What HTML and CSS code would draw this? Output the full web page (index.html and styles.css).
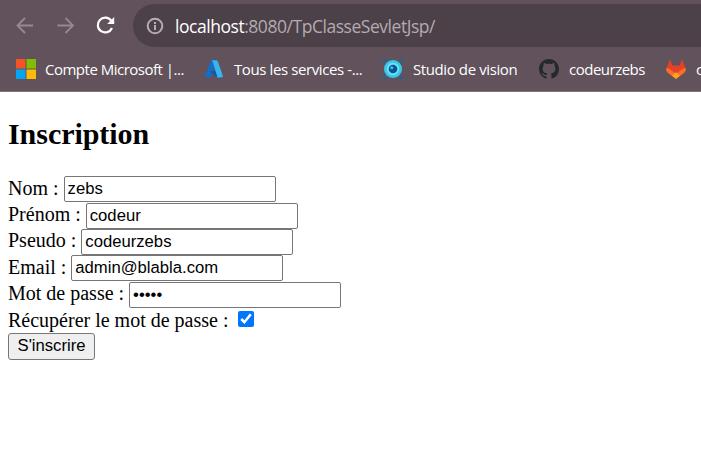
FILE: index.html
```html
<!DOCTYPE html>
<html lang="fr">
<head>
<meta charset="utf-8">
<title>Inscription</title>
<link rel="stylesheet" href="styles.css">
</head>
<body>
<header class="browser">
  <div class="toolbar">
    <svg class="nav" viewBox="0 0 20 20"><path d="M18 9.500H3M10 2 2.500 9.500 10 17"/></svg>
    <svg class="nav" viewBox="0 0 20 20"><path d="M2.500 9.500h15M10.500 2l7.500 7.500-7.500 7.500"/></svg>
    <svg class="nav reload" viewBox="0 0 20 20"><path d="M16.200 4.700A7.400 7.400 0 1 0 17 12"/><path class="tip" d="M19.200 1V8h-7z"/></svg>
    <div class="address">
      <svg class="info" viewBox="0 0 18 18"><circle cx="9" cy="9" r="7.300"/><path d="M9 8v5M9 5v2"/></svg>
      <span class="url"><b>localhost</b>:8080/TpClasseSevletJsp/</span>
    </div>
  </div>
  <nav class="bookmarks">
    <a class="bookmark microsoft"><svg viewBox="0 0 20 20"><path fill="#f35325" d="M0 0h9.500v9.500H0z"/><path fill="#81bc06" d="M10.500 0H20v9.500h-9.500z"/><path fill="#05a6f0" d="M0 10.500h9.500V20H0z"/><path fill="#ffba08" d="M10.500 10.500H20V20h-9.500z"/></svg><span>Compte Microsoft |...</span></a>
    <a class="bookmark azure"><svg viewBox="0 0 20 20"><path fill="#126fc4" d="M7 1.200h6L6.700 18.400H2.200Q.8 18 1.200 16.800z"/><path fill="#0a5cae" d="M6 12.200h8l2 6.200-3.200.1z"/><path fill="#38b4ee" d="M7.300 1.200h5.200q1 .1 1.300 1l5.100 14.900q.1 1.300-1.300 1.400h-5.300q1-.2.8-1.600L8.500 2.200q-.4-1-1.200-1z"/></svg><span>Tous les services -...</span></a>
    <a class="bookmark vision"><svg viewBox="0 0 20 20"><path fill="none" stroke="#1765a5" stroke-width="1.500" d="M1 4V1h3M16 1h3v3M19 16v3h-3M4 19H1v-3"/><circle cx="10" cy="10" r="9" fill="#39c9ed"/><circle cx="10" cy="10" r="6.200" fill="#5fe5fa"/><circle cx="10" cy="10" r="4.300" fill="#0f5293"/><circle cx="8.800" cy="8.800" r="1.500" fill="#5ab5e5"/></svg><span>Studio de vision</span></a>
    <a class="bookmark github"><svg viewBox="0 0 16 16"><path fill="#24292e" d="M8 0C3.58 0 0 3.58 0 8c0 3.54 2.29 6.53 5.47 7.59.4.07.55-.17.55-.38 0-.19-.01-.82-.01-1.49-2.01.37-2.53-.49-2.69-.94-.09-.23-.48-.94-.82-1.13-.28-.15-.68-.52-.01-.53.63-.01 1.08.58 1.23.82.72 1.21 1.87.87 2.33.66.07-.52.28-.87.51-1.07-1.78-.2-3.64-.89-3.64-3.95 0-.87.31-1.59.82-2.15-.08-.2-.36-1.02.08-2.12 0 0 .67-.21 2.2.82.64-.18 1.32-.27 2-.27s1.36.09 2 .27c1.53-1.04 2.2-.82 2.2-.82.44 1.1.16 1.92.08 2.12.51.56.82 1.27.82 2.15 0 3.07-1.87 3.75-3.65 3.95.29.25.54.73.54 1.48 0 1.07-.01 1.93-.01 2.2 0 .21.15.46.55.38A8.01 8.01 0 0 0 16 8c0-4.42-3.58-8-8-8z"/></svg><span>codeurzebs</span></a>
    <a class="bookmark gitlab"><svg viewBox="0 0 20 20"><path fill="#e24329" d="M4 .3 6.400 6.500h7.200L16 .3 19.600 9.500 10 20 .4 9.500z"/><path fill="#fc6d26" d="M.4 9q3 .4 5.300 2.500L10 15l4.300-3.500Q16.600 9.400 19.600 9q1 2.800-1.500 5L10 20l-8.100-6Q-.6 11.800.4 9z"/><path fill="#fca326" d="m10 13.200 4 3.400L10 20l-4-3.400z"/></svg><span>codeur</span></a>
  </nav>
</header>
<main class="page">
  <h2>Inscription</h2>
  <form>
    <label class="row"><span>Nom :</span> <input type="text" value="zebs"></label>
    <label class="row"><span>Prénom :</span> <input type="text" value="codeur"></label>
    <label class="row"><span>Pseudo :</span> <input type="text" value="codeurzebs"></label>
    <label class="row"><span>Email :</span> <input type="text" value="admin@blabla.com"></label>
    <label class="row"><span>Mot de passe :</span> <input type="password" value="admin"></label>
    <label class="row remember"><span>Récupérer le mot de passe :</span> <input type="checkbox" checked></label>
    <button type="button">S'inscrire</button>
  </form>
</main>
</body>
</html>
```
FILE: styles.css
```css
* { box-sizing: border-box; }
body { margin: 0; height: 459px; overflow: hidden; background: #fff; color: #000; font: 20px "Liberation Serif", serif; }
.browser { height: 92px; overflow: hidden; background: #61525c; border-bottom: 1px solid #81757d; font-family: "Open Sans", sans-serif; color: #fff; }
.toolbar { display: flex; align-items: center; height: 51px; padding-left: 15px; }
.nav { flex: none; width: 20px; height: 20px; margin-right: 20px; fill: none; stroke: #95898f; stroke-width: 1.8; }
.reload { margin-right: 18px; stroke: #fff; stroke-width: 2.2; }
.reload .tip { fill: #fff; stroke: none; }
.address { display: flex; align-items: center; flex: 1; height: 43px; padding-left: 13px; border-radius: 22px 0 0 22px; background: #4c4049; }
.info { width: 18px; height: 18px; fill: none; stroke: #b5adb2; stroke-width: 2; }
.url { margin-left: 11px; font-size: 17.5px; letter-spacing: -.46px; color: #b3acb0; white-space: nowrap; }
.url b { font-weight: 400; color: #fff; }
.bookmarks { display: flex; height: 36px; padding-left: 16px; }
.bookmark { display: flex; flex: none; align-items: center; gap: 9px; font-size: 15px; letter-spacing: -.4px; white-space: nowrap; }
.bookmark svg { flex: none; width: 20px; height: 20px; }
.bookmark span { padding-bottom: 1px; }
.microsoft { width: 188px; letter-spacing: -.5px; }
.azure { width: 179px; gap: 10px; }
.vision { width: 156px; gap: 10px; }
.github { width: 127px; gap: 10px; letter-spacing: -.5px; }
.gitlab { gap: 10px; }
.page { padding: 24px 8px 0; }
h2 { margin: 0 0 25px; font-size: 30px; line-height: 35px; letter-spacing: -.05px; }
.row { display: flex; align-items: center; gap: 5px; height: 26.4px; white-space: nowrap; line-height: 23px; }
.row span { padding-bottom: 2px; }
.row input[type="text"], .row input[type="password"] { width: 212px; height: 26px; margin: 0; padding: 1px 3px; border: 1px solid #767676; border-radius: 2px; background: #fff; color: #000; font: 16.667px "Liberation Sans", sans-serif; }
.remember { height: 25px; gap: 10px; }
.remember span { padding-bottom: 0; }
.remember input { width: 16px; height: 16px; margin: 0 0 2px; accent-color: #0075ff; }
button { display: block; width: 87px; height: 27px; margin: 0; padding: 0; border: 1px solid #767676; border-radius: 3px; background: #efefef; color: #000; font: 16.667px "Liberation Sans", sans-serif; }
```
